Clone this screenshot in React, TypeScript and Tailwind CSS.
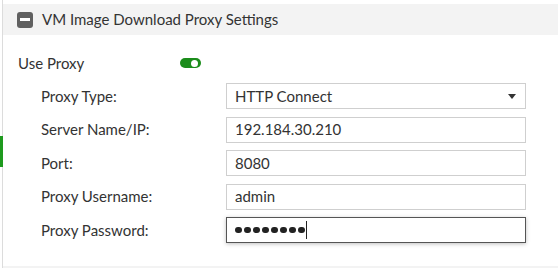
import React from "react";

const fields = [
  { label: "Server Name/IP:", value: "192.184.30.210" },
  { label: "Port:", value: "8080" },
  { label: "Proxy Username:", value: "admin" },
];

function Row({ label, children }: { label: string; children: React.ReactNode }) {
  return (
    <div className="flex h-[26px] items-center">
      <span className="w-[185px] shrink-0">{label}</span>
      {children}
    </div>
  );
}

export default function App() {
  return (
    <div
      className="relative h-[268px] w-[559px] overflow-hidden bg-white pl-[2px] pr-[1px] text-[15px] text-[#333]"
      style={{ fontFamily: "Lato, 'Open Sans', sans-serif" }}
    >
      {/* active section marker */}
      <div className="absolute left-0 top-[136px] h-[31px] w-[3px] bg-[#1e9a1e]" />

      <div className="flex h-full flex-col border-l border-[#dcdcdc]">
        <div className="mt-[4px] flex h-[31px] items-center gap-[9px] bg-[#f3f3f3] pl-[14px]">
          <div className="flex h-[16px] w-[16px] items-center justify-center rounded-[3px] bg-[#606060]">
            <div className="h-[3px] w-[10px] bg-white" />
          </div>
          <span className="text-[15px]">VM Image Download Proxy Settings</span>
        </div>

        <div className="flex flex-1 flex-col pl-[15px]">
          <div className="mt-[20px] flex h-[16px] items-center">
            <span className="w-[162px]">Use Proxy</span>
            <div className="flex h-[10px] w-[21px] items-center justify-end rounded-full bg-[#1b8c1b] pr-[3px]">
              <div className="h-[7px] w-[7px] rounded-full bg-white" />
            </div>
          </div>

          <div className="mt-[12px] flex flex-col gap-[7.5px] pl-[23px]">
            <Row label="Proxy Type:">
              <div className="flex h-[26px] w-[300px] items-center justify-between border border-[#cfcfcf] pl-[8px] pr-[9px]">
                <span>HTTP Connect</span>
                <svg width="8" height="5" viewBox="0 0 8 5">
                  <path d="M0 0h8L4 5z" fill="#333" />
                </svg>
              </div>
            </Row>
            {fields.map((f) => (
              <Row key={f.label} label={f.label}>
                <div className="flex h-[26px] w-[300px] items-center border border-[#cfcfcf] pl-[8px]">
                  {f.value}
                </div>
              </Row>
            ))}
            <Row label="Proxy Password:">
              <div className="flex h-[26px] w-[300px] items-center border border-[#555] pl-[8px] shadow-[0_1px_4px_rgba(0,0,0,0.25)]">
                <div className="flex gap-[2.5px]">
                  {[0, 1, 2, 3, 4, 5, 6, 7].map((i) => (
                    <span key={i} className="h-[6.5px] w-[6.5px] rounded-full bg-[#222]" />
                  ))}
                </div>
                <span className="ml-[1px] h-[18px] w-px bg-[#222]" />
              </div>
            </Row>
          </div>
        </div>

        <div className="h-[2px] bg-[#f3f3f3]" />
      </div>
    </div>
  );
}
